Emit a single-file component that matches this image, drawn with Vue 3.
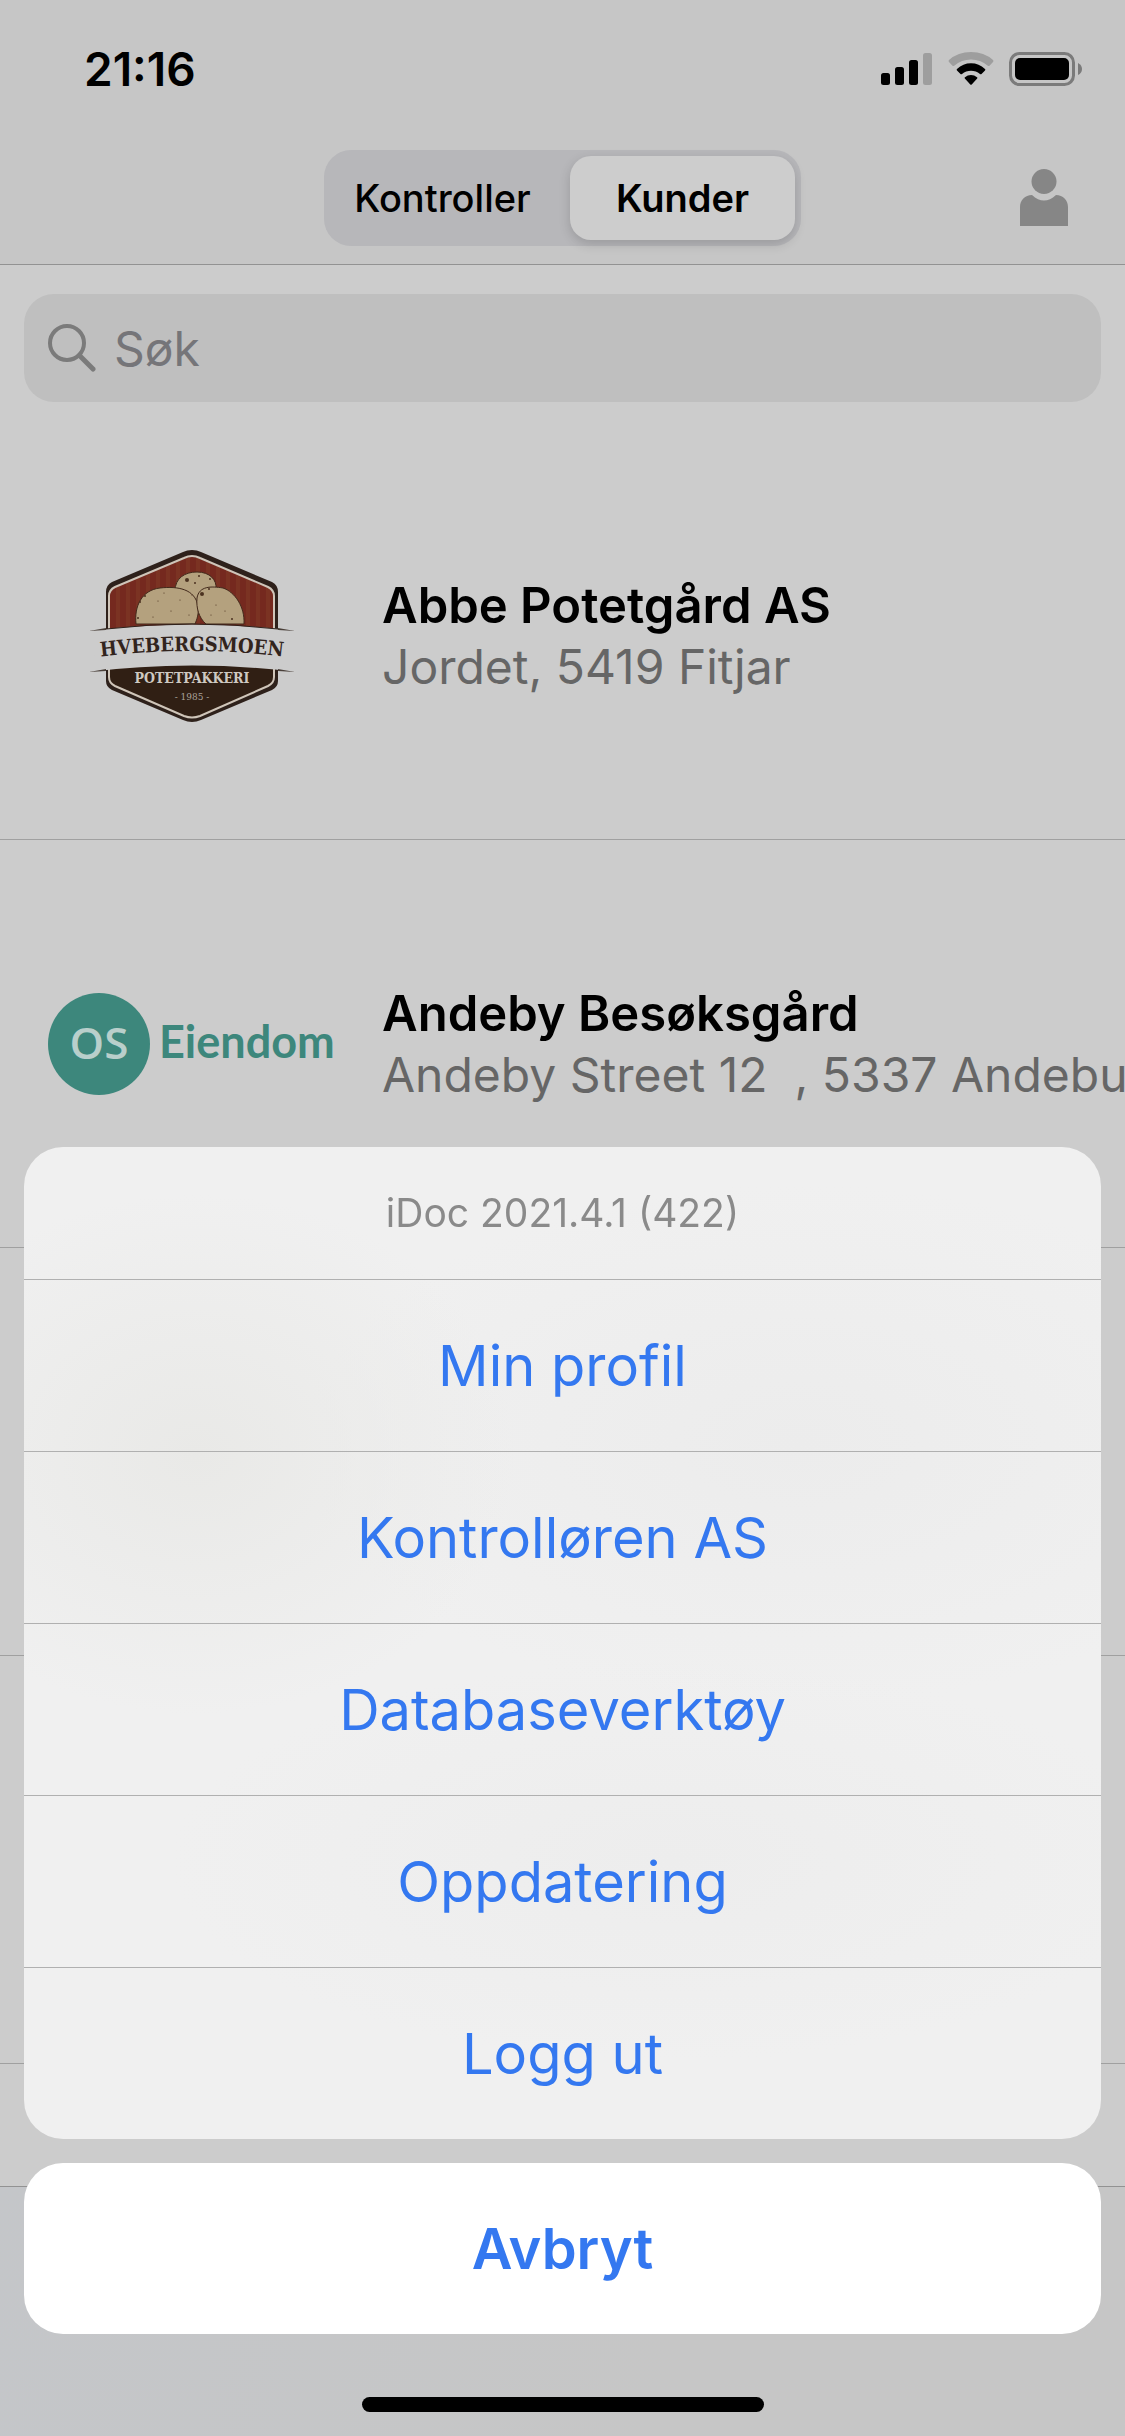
<script setup>
import { ref } from 'vue'

const tabs = ['Kontroller', 'Kunder']
const activeTab = ref('Kunder')
const query = ref('')
const actions = ['Min profil', 'Kontrolløren AS', 'Databaseverktøy', 'Oppdatering', 'Logg ut']
const stripes = Array.from({ length: 17 }, (_, i) => 70 + i * 10)
</script>

<template>
  <div class="app">
    <header class="top">
      <div class="status">
        <time class="clock">21:16</time>
        <div class="indicators">
          <svg width="52" height="34" viewBox="0 0 52 34" aria-hidden="true">
            <rect x="0" y="21" width="9" height="12" rx="2.5" />
            <rect x="14" y="15" width="9" height="18" rx="2.5" />
            <rect x="28" y="8" width="9" height="25" rx="2.5" />
            <rect x="42" y="1" width="9" height="32" rx="2.5" fill="#9e9e9e" />
          </svg>
          <svg width="46" height="34" viewBox="0 0 46 34" aria-hidden="true">
            <path d="M1 10 Q0 9 1 8 Q10 0 23 0 Q36 0 45 8 Q46 9 45 10 L41.500 13.700 Q40.700 14.500 39.800 13.700 Q32.500 7.500 23 7.500 Q13.500 7.500 6.200 13.700 Q5.300 14.500 4.500 13.700 Z" fill="#9e9e9e" />
            <path d="M9 18.500 Q8.200 17.700 9 16.900 Q15 11.300 23 11.300 Q31 11.300 37 16.900 Q37.800 17.700 37 18.500 L33.500 22 Q32.800 22.700 32 22 Q28 18.700 23 18.700 Q18 18.700 14 22 Q13.200 22.700 12.500 22 Z" />
            <path d="M16.800 26.500 Q16.200 25.800 17 25.200 Q19.600 23 23 23 Q26.400 23 29 25.200 Q29.800 25.800 29.200 26.500 L23.700 32.400 Q23 33.100 22.300 32.400 Z" />
          </svg>
          <svg width="74" height="36" viewBox="0 0 74 36" aria-hidden="true">
            <rect x="1.500" y="2.500" width="63" height="31" rx="9" fill="none" stroke="#7b7b7b" stroke-width="3" />
            <rect x="6" y="7" width="54" height="22" rx="5" />
            <path d="M69 12 Q73 14 73 18 Q73 22 69 24 Z" fill="#7b7b7b" />
          </svg>
        </div>
      </div>
      <nav class="nav">
        <div class="segmented">
          <button
            v-for="tab in tabs"
            :key="tab"
            type="button"
            class="segment"
            :class="{ selected: tab === activeTab }"
            @click="activeTab = tab"
          >{{ tab }}</button>
        </div>
        <button class="profile" type="button" aria-label="Profil">
          <svg width="48" height="58" viewBox="0 0 48 58" aria-hidden="true">
            <ellipse cx="24" cy="12.500" rx="12.500" ry="12.500" fill="#868686" />
            <path d="M0 57 V38 C0 31 5 26 12 26 C16 30 20 31.500 24 31.500 C28 31.500 32 30 36 26 C43 26 48 31 48 38 V57 Z" fill="#868686" />
          </svg>
        </button>
      </nav>
    </header>

    <main class="content">
      <label class="search">
        <svg width="48" height="48" viewBox="0 0 48 48" fill="none" stroke="#7b7b7b" stroke-width="4" stroke-linecap="round" aria-hidden="true">
          <circle cx="19" cy="19" r="17" />
          <path d="M31.500 31.500 L45 45" stroke-width="5" />
        </svg>
        <input v-model="query" type="search" placeholder="Søk" aria-label="Søk" />
      </label>

      <ul class="customers">
        <li class="customer">
          <svg class="logo" viewBox="0 0 288 180" role="img" aria-label="Hvebergsmoen Potetpakkeri">
            <defs>
              <clipPath id="shield"><path d="M144 11 Q148 11 152 13 L220 41 Q226 44 226 50 V131 Q226 137 220 140 L152 170 Q144 173 136 170 L67 140 Q61 137 61 131 V50 Q61 44 67 41 L136 13 Q140 11 144 11 Z" /></clipPath>
              <path id="banner-line" d="M34 113 Q144 97 254 113" />
            </defs>
            <path d="M144 4 Q149 4 153 6 L224 36 Q230 39 230 46 V135 Q230 141 224 144 L153 174 Q144 178 135 174 L64 144 Q58 141 58 135 V46 Q58 39 64 36 L135 6 Q139 4 144 4 Z" fill="#2e211b" />
            <g clip-path="url(#shield)">
              <rect x="58" y="4" width="174" height="90" fill="#75291f" />
              <path v-for="x in stripes" :key="x" :d="`M${x} 6 V94`" stroke="#7b3323" stroke-width="4" />
              <rect x="58" y="94" width="174" height="84" fill="#301f14" />
            </g>
            <path d="M144 10 Q148 10 152 12 L220 41 Q226 44 226 50 V131 Q226 137 220 140 L152 170 Q144 173 136 170 L67 140 Q61 137 61 131 V50 Q61 44 67 41 L136 12 Q140 10 144 10 Z" fill="none" stroke="#cfc5b9" stroke-width="2" />
            <g fill="#b4a17e" stroke="#42291b" stroke-width="1">
              <path d="M127 45 C127 32 137 26 149 26 C162 26 169 34 168 43 C158 48 154 62 150 69 C143 70 127 64 127 45 Z" />
              <path d="M88 78 C86 60 94 44 112 42 C130 40 147 43 150 60 C151 68 149 73 147 78 Z" />
              <path d="M149 52 C151 40 163 40 175 42 C187 46 197 61 196 78 H158 C151 72 148 62 149 52 Z" />
            </g>
            <g fill="#4b3220">
              <circle cx="139" cy="34" r="2" /><circle cx="147" cy="37" r="1" /><circle cx="151" cy="30" r="1" /><circle cx="162" cy="33" r="1" />
              <circle cx="154" cy="48" r="2" /><circle cx="161" cy="43" r="1" /><circle cx="184" cy="73" r="1" /><circle cx="92" cy="56" r="1" />
              <circle cx="97" cy="50" r="1" /><circle cx="90" cy="72" r="1" /><circle cx="110" cy="55" r=".6" /><circle cx="123" cy="65" r=".6" />
              <circle cx="132" cy="54" r=".6" /><circle cx="141" cy="69" r=".6" /><circle cx="168" cy="59" r=".6" /><circle cx="177" cy="65" r=".6" />
              <circle cx="105" cy="71" r=".6" /><circle cx="116" cy="47" r=".6" /><circle cx="163" cy="69" r=".6" /><circle cx="144" cy="49" r=".6" />
            </g>
            <path d="M40 85 Q144 72 248 85 L240 105 L248 126 Q144 113 40 126 L48 105 Z" fill="#cccccc" />
            <path d="M41 85 L58 82 V84 Z M247 85 L230 82 V84 Z M41 126 L58 123 V125 Z M247 126 L230 123 V125 Z" fill="#4a403a" />
            <path d="M58 83 Q144 73 230 83" fill="none" stroke="#2e211b" stroke-width="1" />
            <text class="brand"><textPath href="#banner-line" startOffset="50%">HVEBERGSMOEN</textPath></text>
            <text class="trade" x="144" y="137">POTETPAKKERI</text>
            <text class="year" x="144" y="154">- 1985 -</text>
          </svg>
          <div class="details">
            <h2>Abbe Potetgård AS</h2>
            <p>Jordet, 5419 Fitjar</p>
          </div>
        </li>
        <li class="customer">
          <svg class="logo" viewBox="0 0 288 180" role="img" aria-label="OS Eiendom">
            <circle cx="51" cy="90" r="51" fill="#3d877c" />
            <text class="os" x="51" y="105">OS</text>
            <text class="eiendom" x="111" y="104">Eiendom</text>
          </svg>
          <div class="details">
            <h2>Andeby Besøksgård</h2>
            <p>Andeby Street 12&nbsp; , 5337 Andebu</p>
          </div>
        </li>
        <li class="customer"></li>
        <li class="customer"></li>
      </ul>
    </main>
    <footer class="tabbar"></footer>

    <div class="overlay">
      <section class="sheet" role="dialog" aria-labelledby="version">
        <p id="version">iDoc 2021.4.1 (422)</p>
        <button v-for="action in actions" :key="action" type="button">{{ action }}</button>
      </section>
      <button class="cancel" type="button">Avbryt</button>
      <div class="home-indicator"></div>
    </div>
  </div>
</template>

<style>
body {
  margin: 0;
}
</style>

<style scoped>
.app {
  display: flex;
  flex-direction: column;
  height: 100vh;
  overflow: hidden;
  background: #cccccc;
  color: #000;
  font-family: Inter, "Liberation Sans", sans-serif;
}

button {
  margin: 0;
  padding: 0;
  border: 0;
  background: none;
  color: inherit;
  font: inherit;
}

svg {
  display: block;
  flex: none;
}

.top {
  flex: none;
  background: #c6c6c6;
  border-bottom: 1px solid #929292;
}

.status {
  display: flex;
  align-items: center;
  justify-content: space-between;
  height: 132px;
  padding: 6px 42px 0 84px;
  box-sizing: border-box;
}

.clock {
  font-size: 46px;
  font-weight: 600;
}

.indicators {
  display: flex;
  align-items: center;
  gap: 15px;
}

.nav {
  display: grid;
  grid-template-columns: 1fr auto 1fr;
  align-items: center;
  height: 132px;
  padding: 0 57px;
}

.segmented {
  display: grid;
  grid-column: 2;
  grid-template-columns: 225px 225px;
  gap: 15px;
  padding: 6px;
  border-radius: 27px;
  background: #b7b7ba;
}

.segment {
  height: 84px;
  border-radius: 21px;
  font-size: 38px;
  font-weight: 500;
}

.segment.selected {
  background: #cdcdcd;
  font-weight: 600;
  box-shadow: 0 4px 12px rgba(0, 0, 0, 0.16);
}

.profile {
  justify-self: end;
}

.content {
  flex: 1;
  min-height: 0;
  overflow: hidden;
}

.search {
  display: flex;
  align-items: center;
  gap: 18px;
  height: 108px;
  margin: 29px 24px 30px;
  padding: 0 24px;
  box-sizing: border-box;
  border-radius: 30px;
  background: #bfbfbf;
}

.search input {
  flex: 1;
  min-width: 0;
  padding: 0;
  border: 0;
  outline: 0;
  background: none;
  color: #000;
  font: inherit;
  font-size: 48px;
}

.search input::placeholder {
  color: #757579;
  opacity: 1;
}

.customers {
  margin: 0;
  padding: 0;
  list-style: none;
}

.customer {
  display: flex;
  align-items: center;
  gap: 46px;
  height: 408px;
  padding-left: 48px;
  box-sizing: border-box;
  border-bottom: 1px solid #a0a0a0;
}

.logo {
  width: 288px;
  height: 180px;
}

.brand {
  fill: #32241d;
  font: bold 20px "DejaVu Serif Condensed", "DejaVu Serif", serif;
  text-anchor: middle;
}

.trade {
  fill: #cfc9c2;
  font: bold 14px "DejaVu Serif Condensed", "DejaVu Serif", serif;
  text-anchor: middle;
}

.year {
  fill: #aaa39b;
  font: 10px "DejaVu Serif Condensed", "DejaVu Serif", serif;
  text-anchor: middle;
}

.os {
  fill: #b9cfcb;
  font: 600 44px "Open Sans", sans-serif;
  text-anchor: middle;
}

.eiendom {
  fill: #3d877c;
  font: bold 45px Lato, sans-serif;
}

.details {
  white-space: nowrap;
  line-height: 61px;
}

.details h2,
.details p {
  margin: 0;
}

.details h2 {
  font-size: 49px;
  font-weight: 600;
}

.details p {
  color: #666666;
  font-size: 48px;
}

.tabbar {
  flex: none;
  height: 249px;
  border-top: 1px solid #929292;
  background: linear-gradient(100deg, #c4c6c9, #c6c6c6 60%);
}

.overlay {
  position: fixed;
  inset: 0;
  display: flex;
  flex-direction: column;
  justify-content: flex-end;
  padding: 0 24px 24px;
}

.sheet {
  overflow: hidden;
  border-radius: 39px;
  background:
    radial-gradient(320px 260px at 16% 31%, #e9e9e7, transparent),
    radial-gradient(500px 260px at 72% 30%, #ececec, transparent),
    radial-gradient(500px 200px at 60% 72%, #ededed, transparent),
    #f0f0f0;
}

.sheet p {
  margin: 0;
  color: #8a8a8a;
  font-size: 39px;
  line-height: 132px;
  text-align: center;
}

.sheet button,
.cancel {
  display: block;
  width: 100%;
  height: 172px;
  color: #3478f0;
  font-size: 56px;
}

.sheet button {
  border-top: 1px solid #b0b0b0;
}

.cancel {
  flex: none;
  height: 171px;
  margin: 24px 0 63px;
  border-radius: 39px;
  background: #fff;
  font-weight: 600;
}

.home-indicator {
  flex: none;
  align-self: center;
  width: 402px;
  height: 15px;
  border-radius: 8px;
  background: #000;
}
</style>
